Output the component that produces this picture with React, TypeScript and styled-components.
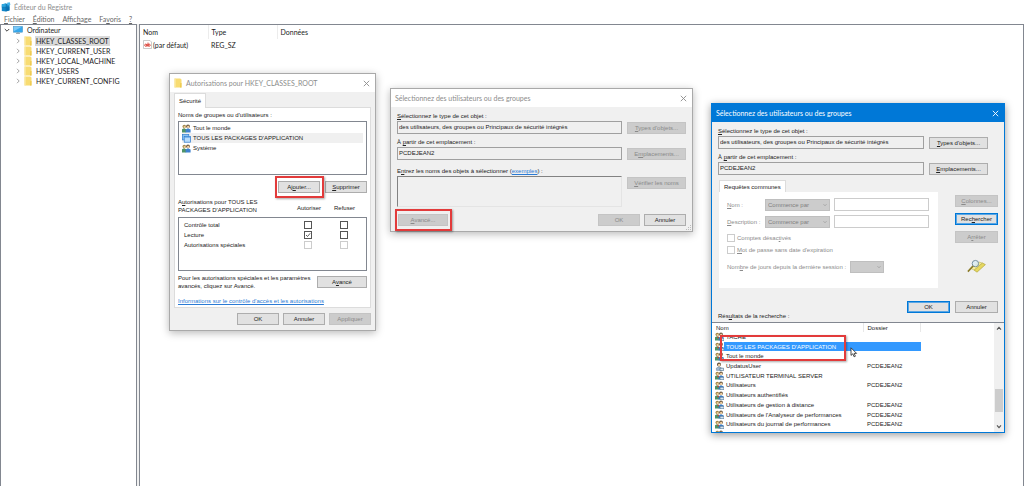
import React from "react";
import styled, { createGlobalStyle, css } from "styled-components";

const uiFont = 'Lato, "Noto Sans", sans-serif';
const dialogFont = '"Liberation Sans", Arial, sans-serif';

const GlobalStyle = createGlobalStyle`
  *, *::before, *::after { box-sizing: border-box; }
  body {
    margin: 0;
    background: #f0f0f0;
    color: #222;
    font: 7px/10px ${uiFont};
    overflow: hidden;
  }
  button, input, select, textarea { font: inherit; color: inherit; margin: 0; border-radius: 0; }
  ul, p, h1, h2 { margin: 0; padding: 0; list-style: none; font: inherit; }
  u { text-decoration: underline; text-underline-offset: 1px; }
`;

/* ---------- Editor shell ---------- */

const Desktop = styled.div`
  position: relative;
  min-height: 100vh;
  display: flex;
  flex-direction: column;
  background: #fff;
`;

const AppTitle = styled.header`
  display: flex;
  align-items: center;
  gap: 3px;
  height: 14px;
  padding: 0 1px;
  color: #8c8c8c;
`;

const MenuBar = styled.nav`
  display: flex;
  gap: 8px;
  height: 10px;
  padding: 0 4px;
  color: #666;
`;

const MenuItem = styled.button`
  padding: 0;
  border: 0;
  background: none;
  line-height: 10px;
`;

const Panes = styled.main`
  flex: 1;
  display: grid;
  grid-template-columns: 137px 1fr;
  gap: 2px;
  background: #f0f0f0;
`;

const Pane = styled.section`
  border: 1px solid #828790;
  border-bottom: 0;
  background: #fff;
`;

const Tree = styled.ul`
  display: flex;
  flex-direction: column;
  gap: 1px;
  padding: 0 3px;
`;

const TreeBranch = styled.ul`
  padding-left: 11px;
`;

const TreeRow = styled.li`
  display: flex;
  align-items: center;
  gap: 3px;
  height: 10px;
`;

const TreeLabel = styled.span<{ $selected?: boolean }>`
  padding: 0 1px;
  line-height: 10px;
  white-space: nowrap;
  background: ${(p) => (p.$selected ? "#d9d9d9" : "transparent")};
`;

const ValueTable = styled.table`
  border-collapse: collapse;
  table-layout: fixed;
  width: 100%;
  th, td { padding: 0 3px; text-align: left; font-weight: 400; white-space: nowrap; }
  th { height: 14px; border-right: 1px solid #ececec; }
  th:last-child { border-right: 0; }
  td { height: 11px; }
`;

const IconText = styled.span`
  display: flex;
  align-items: center;
  gap: 1px;
`;

/* ---------- Dialog parts ---------- */

const Dialog = styled.section<{ $x: number; $y: number; $w: number; $active?: boolean }>`
  position: absolute;
  left: ${(p) => p.$x}px;
  top: ${(p) => p.$y}px;
  width: ${(p) => p.$w}px;
  display: flex;
  flex-direction: column;
  border: 1px solid ${(p) => (p.$active ? "#0078d7" : "#a9a9a9")};
  background: #f0f0f0;
  box-shadow: 0 2px 8px rgba(0, 0, 0, ${(p) => (p.$active ? 0.4 : 0.28)});
  font-family: ${dialogFont};
  font-size: 6px;
  line-height: 8px;
`;

const DialogTitle = styled.header<{ $active?: boolean }>`
  display: flex;
  align-items: center;
  gap: 4px;
  height: 18px;
  padding: 0 5px 0 4px;
  font-family: ${uiFont};
  font-size: 7px;
  background: ${(p) => (p.$active ? "#0078d7" : "#fff")};
  color: ${(p) => (p.$active ? "#fff" : "#8c8c8c")};
  h2 { flex: 1; white-space: nowrap; }
`;

const CloseButton = styled.button`
  display: flex;
  padding: 0;
  border: 0;
  background: none;
`;

const Button = styled.button<{ $w: number; $primary?: boolean }>`
  flex-shrink: 0;
  width: ${(p) => p.$w}px;
  height: 12px;
  padding: 0;
  border: 1px solid #adadad;
  background: #e1e1e1;
  line-height: 10px;
  text-align: center;
  white-space: nowrap;
  ${(p) => p.$primary && css`border-color: #0078d7; box-shadow: inset 0 0 0 1px #5aa6e4;`}
  &:disabled { border-color: #c4c4c4; background: #cccccc; color: #8a8a8a; }
`;

const markStyle = css`
  border: 2px solid #e23b3b;
  box-shadow: 1px 1px 2px rgba(0, 0, 0, 0.35);
  pointer-events: none;
`;

const Marked = styled.span`
  position: relative;
  display: flex;
  &::after {
    content: "";
    position: absolute;
    inset: -5px -4px -5px -3px;
    ${markStyle}
  }
`;

const TabStrip = styled.div`
  display: flex;
`;

const Tab = styled.button<{ $h: number }>`
  height: ${(p) => p.$h}px;
  padding: 0 4px;
  border: 1px solid #dcdcdc;
  border-bottom: 0;
  background: #fff;
`;

const Row = styled.div<{ $gap?: number; $end?: boolean }>`
  display: flex;
  align-items: center;
  gap: ${(p) => p.$gap ?? 5}px;
  justify-content: ${(p) => (p.$end ? "flex-end" : "space-between")};
`;

const Link = styled.a`
  color: #2a7ad4;
  text-decoration: underline;
  text-underline-offset: 1px;
`;

/* Permissions dialog */

const PermBody = styled.div`
  padding: 1px 4px 0;
`;

const PermPanel = styled.div`
  display: flex;
  flex-direction: column;
  height: 201px;
  padding: 3px 3px 0;
  border: 1px solid #dcdcdc;
  background: #fff;
  margin-top: -1px;
`;

const GroupList = styled.ul`
  flex-shrink: 0;
  height: 54px;
  margin: 2px 0 6px;
  padding: 1px 3px;
  border: 1px solid #828790;
  background: #fff;
`;

const GroupRow = styled.li<{ $selected?: boolean }>`
  display: flex;
  align-items: center;
  gap: 2px;
  height: 10px;
  background: ${(p) => (p.$selected ? "#f0f0f0" : "transparent")};
`;

const PermTable = styled.table`
  display: block;
  margin: 5px 0 3px;
  tr { display: grid; grid-template-columns: 1fr 26px 45px; align-items: center; }
  th, td { padding: 0; font-weight: 400; text-align: center; }
  th:first-child, td:first-child { text-align: left; }
  thead, tbody { display: block; }
  thead th + th { padding-top: 4px; }
  tbody { height: 54px; margin-top: 3px; padding: 2px 0; border: 1px solid #828790; }
  tbody tr { height: 10px; }
  tbody td:first-child { padding-left: 5px; }
  tbody td { display: flex; justify-content: center; }
  tbody td:first-child { justify-content: flex-start; }
`;

const Check = styled.input.attrs({ type: "checkbox" })`
  appearance: none;
  width: 8px;
  height: 8px;
  border: 1px solid #555;
  background: #fff;
  &:disabled { border-color: #ccc; }
  &:checked {
    background: #fff url("data:image/svg+xml,%3Csvg xmlns='http://www.w3.org/2000/svg' viewBox='0 0 6 6'%3E%3Cpath d='M1 3l1.5 1.5L5.2 1.3' fill='none' stroke='%23333' stroke-width='.8'/%3E%3C/svg%3E");
  }
`;

const Hint = styled.p`
  white-space: nowrap;
`;

const LinkLine = styled.p`
  margin-top: 7px;
`;

const PermFooter = styled.footer`
  padding: 5px 0;
`;

/* Object pickers */

const Picker = styled.div<{ $fieldWidth: number }>`
  display: grid;
  grid-template-columns: ${(p) => p.$fieldWidth}px auto;
  column-gap: 5px;
  row-gap: 1px;
  align-items: center;
  justify-content: start;
  padding: 2px 6px 0;
`;

const FieldLabel = styled.label`
  grid-column: 1 / -1;
  height: 11px;
  padding-top: 3px;
  white-space: nowrap;
`;

const Field = styled.input`
  width: 100%;
  height: 13px;
  padding: 0 1px 1px;
  border: 1px solid #a0a0a0;
  background: #f0f0f0;
`;

const NamesBox = styled.textarea`
  display: block;
  width: 100%;
  height: 31px;
  resize: none;
  border: 1px solid #828282;
  border-right-color: #e4e4e4;
  border-bottom-color: #e4e4e4;
  background: #f0f0f0;
`;

const TopAligned = styled.div`
  align-self: start;
  padding-top: 1px;
`;

const NamesLabel = styled(FieldLabel)`
  margin-top: 3px;
`;

const PickerFooter = styled.footer`
  display: flex;
  align-items: center;
  gap: 4px;
  padding: 7px 6px 5px 7px;
`;

const Spacer = styled.span`
  flex: 1;
`;

const Grip = styled.svg`
  position: absolute;
  right: 1px;
  bottom: 1px;
`;

const QueryArea = styled.div`
  display: grid;
  grid-template-columns: 219px 43px;
  justify-content: space-between;
  padding: 5px 6px 0 7px;
`;

const QueryPanel = styled.div`
  display: flex;
  flex-direction: column;
  height: 96px;
  padding: 6px 8px 0;
  background: #fff;
  color: #8c8c8c;
`;

const QueryLine = styled.div`
  display: grid;
  grid-template-columns: 34px 65px 95px;
  column-gap: 4px;
  align-items: center;
  margin-bottom: 4px;
  white-space: nowrap;
`;

const QueryInput = styled.input`
  width: 100%;
  height: 13px;
  border: 1px solid #ccc;
  background: #fff;
`;

const SelectWrap = styled.span<{ $w: number }>`
  display: grid;
  flex-shrink: 0;
  width: ${(p) => p.$w}px;
  align-items: center;
  > * { grid-area: 1 / 1; }
  svg { justify-self: end; margin-right: 3px; }
`;

const Select = styled.select`
  appearance: none;
  width: 100%;
  height: 12px;
  padding: 0 2px;
  border: 1px solid #bfbfbf;
  background: #ccc;
  &:disabled { color: #808080; opacity: 1; }
`;

const CheckLine = styled.label`
  display: flex;
  align-items: center;
  gap: 2px;
  height: 12px;
`;

const DaysLine = styled.div`
  display: flex;
  align-items: center;
  justify-content: space-between;
  width: 157px;
  margin-top: 5px;
  white-space: nowrap;
`;

const SideButtons = styled.div`
  display: flex;
  flex-direction: column;
  gap: 6px;
  padding-top: 15px;
  svg { margin: 10px 0 0 12px; }
`;

const ResultFooter = styled.footer`
  display: grid;
  grid-template-columns: 1fr 43px 43px;
  column-gap: 5px;
  height: 34px;
  padding: 13px 6px 0;
  h2 { align-self: end; padding-bottom: 2px; }
`;

const Results = styled.div`
  position: relative;
  display: grid;
  grid-template-columns: 1fr 10px;
  height: 110px;
  border-top: 1px solid #828790;
  background: #fff;
`;

const ResultScroll = styled.div`
  overflow: hidden;
`;

const ResultTable = styled.table`
  width: 209px;
  height: 116px;
  border-collapse: collapse;
  table-layout: fixed;
  th, td { padding: 0; font-weight: 400; text-align: left; white-space: nowrap; }
  th { height: 9px; padding-left: 4px; border-right: 1px solid #e8e8e8; }
  th:first-child { width: 151px; }
`;

const ResultRow = styled.tr<{ $selected?: boolean }>`
  td:last-child { padding-left: 4px; }
  ${(p) => p.$selected && css`
    color: #fff;
    td:first-child { background: linear-gradient(90deg, transparent 12px, #3399ff 12px); }
    td:last-child { background: #3399ff; }
  `}
`;

const NameCell = styled.span`
  display: flex;
  align-items: center;
  gap: 2px;
  height: 9px;
  padding-left: 3px;
`;

const ScrollBar = styled.div`
  display: flex;
  flex-direction: column;
  align-items: center;
  padding: 3px 0;
  background: #f0f0f0;
`;

const ScrollThumb = styled.i`
  width: 8px;
  height: 23px;
  margin: auto 0 12px;
  background: #cdcdcd;
`;

const ResultMark = styled.i`
  position: absolute;
  left: 8px;
  top: 12px;
  width: 126px;
  height: 26px;
  ${markStyle}
`;

const Cursor = styled.svg`
  position: absolute;
  left: 138px;
  top: 24px;
`;

/* ---------- Drawings ---------- */

const RegistryIcon = () => (
  <svg width="10" height="10" viewBox="0 0 10 10">
    <path d="M.8 2.2 5 1.6l3.6 1.2v5.6L5 9.6.8 9z" fill="#1286c8" />
    <path d="M.8 2.2 5 1.6v3.6L.8 5.2z" fill="#2ea7df" />
    <path d="M5 5.2h3.6M5 1.8v7.8M.8 5.2H5" stroke="#0b5f96" strokeWidth=".4" />
    <path d="M6 .8 8.8.2l.6 2.8-2.8.6z" fill="#45b4ea" />
    <path d="M5.3 5.6h3v2.6l-3 .9z" fill="#0a6fb0" />
  </svg>
);

const ComputerIcon = () => (
  <svg width="10" height="8" viewBox="0 0 10 8">
    <rect x=".4" y=".4" width="9.2" height="5.8" fill="#35a7ec" stroke="#4a90bd" strokeWidth=".5" />
    <path d="M.8.8h8L.8 5.2z" fill="#7cc9f7" />
    <path d="M3 7.4h4M5 6.2v1" stroke="#7a8a96" strokeWidth=".8" />
  </svg>
);

const FolderIcon = () => (
  <svg width="8" height="10" viewBox="0 0 8 10">
    <path d="M.5.5h5.8l1.2 1v8h-7z" fill="#f8dc72" />
    <path d="M.5.5h1.2v9H.5z" fill="#fbe9a4" />
    <path d="M6.3 5h1.2v4.5H6z" fill="#edc94e" />
  </svg>
);

const Chevron = ({ open }: { open?: boolean }) => (
  <svg width="6" height="6" viewBox="0 0 6 6" fill="none" stroke={open ? "#333" : "#999"} strokeWidth=".9">
    <path d={open ? "M.8 2 3 4.2 5.2 2" : "M2 .8 4.2 3 2 5.2"} />
  </svg>
);

const StringIcon = () => (
  <svg width="9" height="9" viewBox="0 0 9 9">
    <path d="M.5.5h6.5l1.5 1.5v6.5h-8z" fill="#fff" stroke="#aaa" strokeWidth=".6" />
    <g fill="none" stroke="#d8352a" strokeWidth=".9">
      <circle cx="2.8" cy="5.2" r="1.1" />
      <path d="M4 4v2.5M5 2.6v3.8" />
      <circle cx="6.1" cy="5.2" r="1.1" />
    </g>
  </svg>
);

const CloseIcon = () => (
  <svg width="7" height="7" viewBox="0 0 7 7" stroke="currentColor" strokeWidth=".9">
    <path d="M.8.8l5.4 5.4M6.2.8.8 6.2" />
  </svg>
);

const PeopleIcon = ({ badge }: { badge?: boolean }) => (
  <svg width="9" height="9" viewBox="0 0 9 9">
    <path d="M0 8.4V5.2l2-1 2.2 1v3.2z" fill="#4f9468" />
    <circle cx="2.3" cy="2.6" r="1.8" fill="#a3894e" />
    <circle cx="2.6" cy="3" r="1.1" fill="#efcf9a" />
    <path d="M3.6 8.4V5.4l2.4-1.2 2.6 1.2v3z" fill="#3f82cf" />
    <circle cx="6" cy="2.3" r="1.9" fill="#6e5b42" />
    <circle cx="6.2" cy="2.9" r="1.2" fill="#f1cfa0" />
    {badge && <path d="M5 6.2h4v2.6H5z" fill="#d8e6f2" stroke="#3c5f80" strokeWidth=".6" />}
    {badge && <circle cx="3.2" cy="5.4" r=".9" fill="#c14a34" />}
  </svg>
);

const UserIcon = () => (
  <svg width="9" height="9" viewBox="0 0 9 9">
    <circle cx="4" cy="2.4" r="2" fill="#5c4a33" />
    <circle cx="4.2" cy="3" r="1.3" fill="#f1cfa0" />
    <path d="M1.4 8.4V6L4 4.8 6.6 6v2.4z" fill="#9fb9cf" stroke="#55708a" strokeWidth=".4" />
    <path d="M5 6.2h3.6v2.4H5z" fill="#d8e6f2" stroke="#3c5f80" strokeWidth=".6" />
  </svg>
);

const PackageIcon = () => (
  <svg width="9" height="9" viewBox="0 0 9 9">
    <rect x=".4" y=".5" width="6.4" height="5.4" fill="#8cc4f3" stroke="#2f7fce" strokeWidth=".7" />
    <rect x="2.2" y="2.4" width="6.4" height="5.8" fill="#b9dcfa" stroke="#2b78cc" strokeWidth=".7" />
    <path d="M2.4 3.2h6.2" stroke="#4b98e0" strokeWidth=".8" />
  </svg>
);

const SearchArt = () => (
  <svg width="19" height="15" viewBox="0 0 19 15">
    <path d="M7 11 15.4 4l3 1.6L10 13.2z" fill="#e6d860" stroke="#a89a2e" strokeWidth=".6" />
    <path d="M4 9.6 12 3l3.2 1L7 11z" fill="#f4ec9c" stroke="#b5a840" strokeWidth=".5" />
    <circle cx="8.4" cy="4.6" r="3.2" fill="#d9ecf5" fillOpacity=".8" stroke="#6b8796" strokeWidth=".9" />
    <path d="M6 7 .9 12.6" stroke="#8a7a26" strokeWidth="1.6" />
  </svg>
);

const ArrowIcon = ({ up }: { up?: boolean }) => (
  <svg width="6" height="5" viewBox="0 0 6 5" fill="none" stroke="#555" strokeWidth="1.1">
    <path d={up ? "M1 3.6 3 1.4l2 2.2" : "M1 1.4l2 2.2 2-2.2"} />
  </svg>
);

const SelectArrow = () => (
  <svg width="4" height="4" viewBox="0 0 4 4" fill="none" stroke="#999" strokeWidth=".7">
    <path d="M.5 1.2 2 2.8l1.5-1.6" />
  </svg>
);

/* ---------- Data ---------- */

const hives = ["HKEY_CLASSES_ROOT", "HKEY_CURRENT_USER", "HKEY_LOCAL_MACHINE", "HKEY_USERS", "HKEY_CURRENT_CONFIG"];

const results = [
  { name: "TACHE" },
  { name: "TOUS LES PACKAGES D'APPLICATION", selected: true },
  { name: "Tout le monde" },
  { name: "UpdatusUser", folder: "PCDEJEAN2", single: true },
  { name: "UTILISATEUR TERMINAL SERVER" },
  { name: "Utilisateurs", folder: "PCDEJEAN2" },
  { name: "Utilisateurs authentifiés" },
  { name: "Utilisateurs de gestion à distance", folder: "PCDEJEAN2" },
  { name: "Utilisateurs de l'Analyseur de performances", folder: "PCDEJEAN2" },
  { name: "Utilisateurs du journal de performances", folder: "PCDEJEAN2" },
  { name: "" },
];

const permissions = [
  { name: "Contrôle total", allow: false },
  { name: "Lecture", allow: true },
  { name: "Autorisations spéciales", allow: false, disabled: true },
];

/* ---------- Windows ---------- */

const PermissionsDialog = () => (
  <Dialog $x={169} $y={73} $w={207}>
    <DialogTitle>
      <FolderIcon />
      <h2>Autorisations pour HKEY_CLASSES_ROOT</h2>
      <CloseButton aria-label="Fermer"><CloseIcon /></CloseButton>
    </DialogTitle>
    <PermBody>
      <TabStrip><Tab $h={15}>Sécurité</Tab></TabStrip>
      <PermPanel>
        <p>Noms de groupes ou d'utilisateurs :</p>
        <GroupList>
          <GroupRow><PeopleIcon />Tout le monde</GroupRow>
          <GroupRow $selected><PackageIcon />TOUS LES PACKAGES D'APPLICATION</GroupRow>
          <GroupRow><PeopleIcon />Système</GroupRow>
        </GroupList>
        <Row $end>
          <Marked><Button $w={42}>Aj<u>o</u>uter...</Button></Marked>
          <Button $w={42}><u>S</u>upprimer</Button>
        </Row>
        <PermTable>
          <thead>
            <tr>
              <th>A<u>u</u>torisations pour TOUS LES<br />PACKAGES D'APPLICATION</th>
              <th>Autoriser</th>
              <th>Refuser</th>
            </tr>
          </thead>
          <tbody>
            {permissions.map((p) => (
              <tr key={p.name}>
                <td>{p.name}</td>
                <td><Check aria-label={`Autoriser ${p.name}`} defaultChecked={p.allow} disabled={p.disabled} /></td>
                <td><Check aria-label={`Refuser ${p.name}`} disabled={p.disabled} /></td>
              </tr>
            ))}
          </tbody>
        </PermTable>
        <Row>
          <Hint>Pour les autorisations spéciales et les paramètres<br />avancés, cliquez sur Avancé.</Hint>
          <Button $w={50}>A<u>v</u>ancé</Button>
        </Row>
        <LinkLine><Link href="#acces">Informations sur le contrôle d'accès et les autorisations</Link></LinkLine>
      </PermPanel>
      <PermFooter>
        <Row $end $gap={4}>
          <Button $w={42}>OK</Button>
          <Button $w={42}>Annuler</Button>
          <Button $w={42} disabled>Appliquer</Button>
        </Row>
      </PermFooter>
    </PermBody>
  </Dialog>
);

const PickerDialog = () => (
  <Dialog $x={390} $y={88} $w={303}>
    <DialogTitle>
      <h2>Sélectionnez des utilisateurs ou des groupes</h2>
      <CloseButton aria-label="Fermer"><CloseIcon /></CloseButton>
    </DialogTitle>
    <Picker $fieldWidth={225}>
      <FieldLabel htmlFor="type1"><u>S</u>électionnez le type de cet objet :</FieldLabel>
      <Field id="type1" readOnly value="des utilisateurs, des groupes ou Principaux de sécurité intégrés" />
      <Button $w={59} disabled><u>T</u>ypes d'objets...</Button>
      <FieldLabel htmlFor="place1">À <u>p</u>artir de cet emplacement :</FieldLabel>
      <Field id="place1" readOnly value="PCDEJEAN2" />
      <Button $w={59} disabled>E<u>m</u>placements...</Button>
      <NamesLabel as="div">
        <label htmlFor="names">E<u>n</u>trez les noms des objets à sélectionner</label> (<Link href="#exemples">exemples</Link>) :
      </NamesLabel>
      <NamesBox id="names" />
      <TopAligned><Button $w={59} disabled><u>V</u>érifier les noms</Button></TopAligned>
    </Picker>
    <PickerFooter>
      <Marked><Button $w={50} disabled><u>A</u>vancé...</Button></Marked>
      <Spacer />
      <Button $w={42} disabled>OK</Button>
      <Button $w={42}>Annuler</Button>
    </PickerFooter>
    <Grip width="5" height="5" viewBox="0 0 5 5" fill="#bbb">
      <path d="M4 0h1v1H4zM2 2h1v1H2zM4 2h1v1H4zM0 4h1v1H0zM2 4h1v1H2zM4 4h1v1H4z" />
    </Grip>
  </Dialog>
);

const SearchDialog = () => (
  <Dialog $x={711} $y={103} $w={294} $active>
    <DialogTitle $active>
      <h2>Sélectionnez des utilisateurs ou des groupes</h2>
      <CloseButton aria-label="Fermer"><CloseIcon /></CloseButton>
    </DialogTitle>
    <Picker $fieldWidth={206}>
      <FieldLabel htmlFor="type2"><u>S</u>électionnez le type de cet objet :</FieldLabel>
      <Field id="type2" readOnly value="des utilisateurs, des groupes ou Principaux de sécurité intégrés" />
      <Button $w={59}><u>T</u>ypes d'objets...</Button>
      <FieldLabel htmlFor="place2">À <u>p</u>artir de cet emplacement :</FieldLabel>
      <Field id="place2" readOnly value="PCDEJEAN2" />
      <Button $w={59}><u>E</u>mplacements...</Button>
    </Picker>
    <QueryArea>
      <div>
        <TabStrip><Tab $h={12}>Requêtes communes</Tab></TabStrip>
        <QueryPanel>
          <QueryLine>
            <label htmlFor="nom"><u>N</u>om :</label>
            <SelectWrap $w={65}>
              <Select disabled aria-label="Critère du nom"><option>Commence par</option></Select>
              <SelectArrow />
            </SelectWrap>
            <QueryInput id="nom" disabled />
          </QueryLine>
          <QueryLine>
            <label htmlFor="desc"><u>D</u>escription :</label>
            <SelectWrap $w={65}>
              <Select disabled aria-label="Critère de la description"><option>Commence par</option></Select>
              <SelectArrow />
            </SelectWrap>
            <QueryInput id="desc" disabled />
          </QueryLine>
          <CheckLine><Check disabled /><span>Comptes désac<u>t</u>ivés</span></CheckLine>
          <CheckLine><Check disabled /><span><u>M</u>ot de passe sans date d'expiration</span></CheckLine>
          <DaysLine>
            <label htmlFor="jours">Nom<u>b</u>re de jours depuis la dernière session :</label>
            <SelectWrap $w={34}>
              <Select id="jours" disabled />
              <SelectArrow />
            </SelectWrap>
          </DaysLine>
        </QueryPanel>
      </div>
      <SideButtons>
        <Button $w={43} disabled><u>C</u>olonnes...</Button>
        <Button $w={43} $primary>Rec<u>h</u>ercher</Button>
        <Button $w={43} disabled>A<u>r</u>rêter</Button>
        <SearchArt />
      </SideButtons>
    </QueryArea>
    <ResultFooter>
      <h2>Rés<u>u</u>ltats de la recherche :</h2>
      <Button $w={43} $primary>OK</Button>
      <Button $w={43}>Annuler</Button>
    </ResultFooter>
    <Results>
      <ResultScroll>
        <ResultTable>
          <thead><tr><th>Nom</th><th>Dossier</th></tr></thead>
          <tbody>
            {results.map((r) => (
              <ResultRow key={r.name} $selected={r.selected}>
                <td>
                  <NameCell>
                    {r.single ? <UserIcon /> : <PeopleIcon badge />}
                    {r.name}
                  </NameCell>
                </td>
                <td>{r.folder}</td>
              </ResultRow>
            ))}
          </tbody>
        </ResultTable>
      </ResultScroll>
      <ScrollBar>
        <ArrowIcon up />
        <ScrollThumb />
        <ArrowIcon />
      </ScrollBar>
      <ResultMark />
      <Cursor width="8" height="11" viewBox="0 0 8 11">
        <path d="M1 .8v7.6l1.8-1.6 1.3 3 1.3-.6-1.3-2.8h2.5z" fill="#fff" stroke="#222" strokeWidth=".8" />
      </Cursor>
    </Results>
  </Dialog>
);

export default function App() {
  return (
    <Desktop>
      <GlobalStyle />
      <AppTitle>
        <RegistryIcon />
        <h1>Éditeur du Registre</h1>
      </AppTitle>
      <MenuBar>
        <MenuItem><u>F</u>ichier</MenuItem>
        <MenuItem><u>É</u>dition</MenuItem>
        <MenuItem>Affic<u>h</u>age</MenuItem>
        <MenuItem>Fa<u>v</u>oris</MenuItem>
        <MenuItem><u>?</u></MenuItem>
      </MenuBar>
      <Panes>
        <Pane>
          <Tree>
            <TreeRow><Chevron open /><ComputerIcon /><TreeLabel>Ordinateur</TreeLabel></TreeRow>
            <li>
              <TreeBranch>
                {hives.map((name, i) => (
                  <TreeRow key={name}>
                    <Chevron />
                    <FolderIcon />
                    <TreeLabel $selected={i === 0}>{name}</TreeLabel>
                  </TreeRow>
                ))}
              </TreeBranch>
            </li>
          </Tree>
        </Pane>
        <Pane>
          <ValueTable>
            <colgroup><col width="68" /><col width="69" /><col /></colgroup>
            <thead><tr><th>Nom</th><th>Type</th><th>Données</th></tr></thead>
            <tbody>
              <tr><td><IconText><StringIcon />(par défaut)</IconText></td><td>REG_SZ</td><td /></tr>
            </tbody>
          </ValueTable>
        </Pane>
      </Panes>
      <PermissionsDialog />
      <PickerDialog />
      <SearchDialog />
    </Desktop>
  );
}
